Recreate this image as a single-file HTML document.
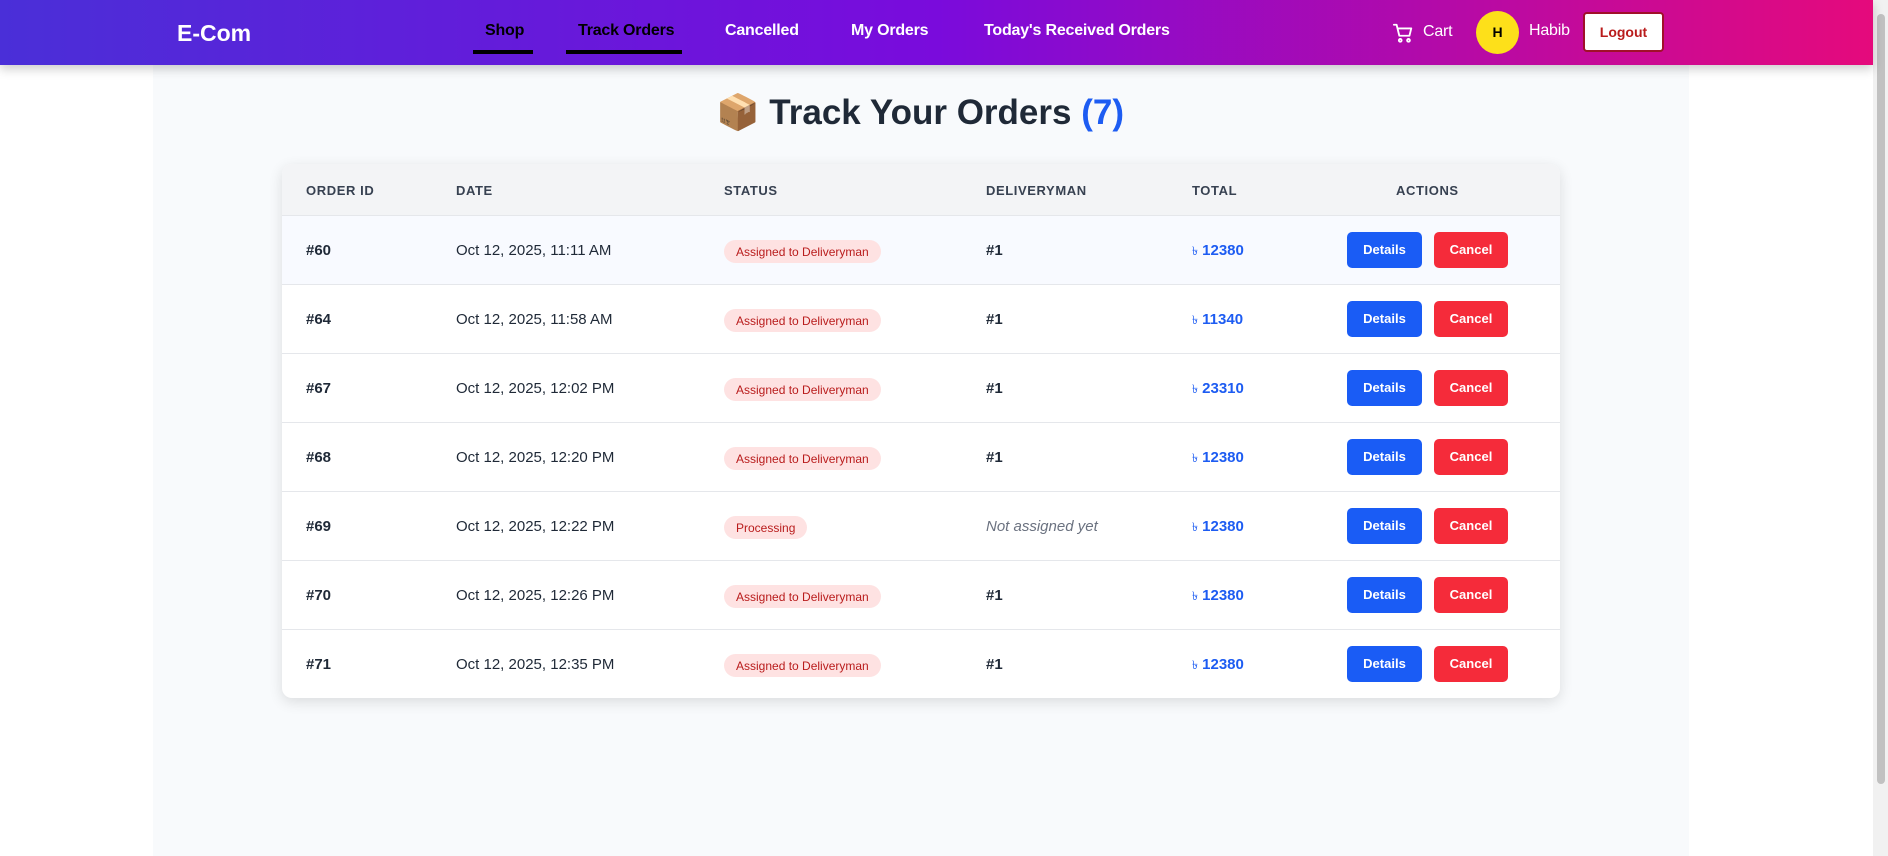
<!DOCTYPE html>
<html><head><meta charset="utf-8"><style>
*{box-sizing:border-box;margin:0;padding:0}
body{width:1888px;height:856px;overflow:hidden;background:#fff;font-family:"Liberation Sans",sans-serif;position:relative}
.nav{position:absolute;left:0;top:0;width:1873px;height:65px;background:linear-gradient(90deg,#4a2fd8 0%,#7a0bdc 50%,#e50a7c 100%);box-shadow:0 4px 10px rgba(0,0,0,.2);z-index:2}
.nav .logo{position:absolute;left:177px;top:20px;color:#fff;font-weight:bold;font-size:23px}
.nav a{position:absolute;top:22px;color:#fff;font-weight:bold;font-size:16px;text-decoration:none;white-space:nowrap;letter-spacing:-.2px}
.nav a.act{color:#000}
.ul{position:absolute;top:50px;height:4px;background:#000}
.scroll{position:absolute;right:0;top:0;width:15px;height:856px;background:#f1f1f1}
.scroll div{position:absolute;left:4px;top:14px;width:8px;height:770px;background:#c1c1c1;border-radius:4px}
.main{position:absolute;left:153px;top:65px;width:1536px;height:791px;background:#f8fafc}
h1{position:absolute;left:716px;top:92px;font-size:35px;font-weight:bold;color:#1f2937;white-space:nowrap}
h1 span.n{color:#1d5cf2}
.card{position:absolute;left:282px;top:164px;width:1278px;height:534px;background:#fff;border-radius:10px;box-shadow:0 4px 14px rgba(0,0,0,.12);overflow:hidden}
.row{position:absolute;left:0;width:1278px;height:69px;border-top:1px solid #e5e7eb;font-size:15px;color:#1f2937}
.row span{position:absolute;top:26px;white-space:nowrap}
.hd{top:0;height:51px;background:#f3f4f6;border:none;font-size:13px;font-weight:bold;color:#374151;letter-spacing:.6px}
.hd span{top:19px}
.b{font-weight:bold}
.badge{top:24px!important;background:#fee2e2;color:#b91c1c;font-size:12px;padding:5px 12px 4px;border-radius:12px}
.tot{color:#1d5cf2;font-weight:bold}
.tot i{font-style:normal;font-size:12px;font-weight:normal}
.btn{top:16px!important;height:36px;line-height:36px;text-align:center;color:#fff;font-size:13px;font-weight:bold;border-radius:5px}
</style></head><body>
<div class="nav">
<div class="logo">E-Com</div>
<a class="act" style="left:485px">Shop</a><div class="ul" style="left:473px;width:60px"></div>
<a class="act" style="left:578px">Track Orders</a><div class="ul" style="left:566px;width:116px"></div>
<a style="left:725px">Cancelled</a>
<a style="left:851px">My Orders</a>
<a style="left:984px">Today's Received Orders</a>
<svg style="position:absolute;left:1392px;top:22px" width="22" height="22" viewBox="0 0 24 24" fill="none" stroke="#fff" stroke-width="2" stroke-linecap="round" stroke-linejoin="round"><path d="M2 3h3l3 12h11l2-8H6"/><circle cx="9" cy="20" r="1.5"/><circle cx="18" cy="20" r="1.5"/></svg>
<a style="left:1423px;font-weight:normal;top:23px">Cart</a>
<div style="position:absolute;left:1476px;top:11px;width:43px;height:43px;border-radius:50%;background:#fde01a;text-align:center;line-height:43px;font-weight:bold;font-size:14px">H</div>
<a style="left:1529px;font-weight:normal">Habib</a>
<div style="position:absolute;left:1583px;top:12px;width:81px;height:40px;background:#fff;border:2px solid #a0102a;border-radius:4px;color:#b91c1c;font-size:14px;font-weight:bold;text-align:center;line-height:36px">Logout</div>
</div>
<div class="scroll"><div></div></div>
<div class="main"></div>
<h1>📦 Track Your Orders <span class="n">(7)</span></h1>
<div class="card">
<div class="row hd"><span style="left:24px">ORDER ID</span><span style="left:174px">DATE</span><span style="left:442px">STATUS</span><span style="left:704px">DELIVERYMAN</span><span style="left:910px">TOTAL</span><span style="left:1114px">ACTIONS</span></div>
<div class="row" style="top:51px;background:#f8faff"><span class="b" style="left:24px">#60</span><span style="left:174px">Oct 12, 2025, 11:11 AM</span><span class="badge" style="left:442px">Assigned to Deliveryman</span><span class="b" style="left:704px">#1</span><span class="tot" style="left:910px"><i>৳</i> 12380</span><span class="btn" style="left:1065px;width:75px;background:#1a5cf5">Details</span><span class="btn" style="left:1152px;width:74px;background:#f52b3a">Cancel</span></div>
<div class="row" style="top:120px"><span class="b" style="left:24px">#64</span><span style="left:174px">Oct 12, 2025, 11:58 AM</span><span class="badge" style="left:442px">Assigned to Deliveryman</span><span class="b" style="left:704px">#1</span><span class="tot" style="left:910px"><i>৳</i> 11340</span><span class="btn" style="left:1065px;width:75px;background:#1a5cf5">Details</span><span class="btn" style="left:1152px;width:74px;background:#f52b3a">Cancel</span></div>
<div class="row" style="top:189px"><span class="b" style="left:24px">#67</span><span style="left:174px">Oct 12, 2025, 12:02 PM</span><span class="badge" style="left:442px">Assigned to Deliveryman</span><span class="b" style="left:704px">#1</span><span class="tot" style="left:910px"><i>৳</i> 23310</span><span class="btn" style="left:1065px;width:75px;background:#1a5cf5">Details</span><span class="btn" style="left:1152px;width:74px;background:#f52b3a">Cancel</span></div>
<div class="row" style="top:258px"><span class="b" style="left:24px">#68</span><span style="left:174px">Oct 12, 2025, 12:20 PM</span><span class="badge" style="left:442px">Assigned to Deliveryman</span><span class="b" style="left:704px">#1</span><span class="tot" style="left:910px"><i>৳</i> 12380</span><span class="btn" style="left:1065px;width:75px;background:#1a5cf5">Details</span><span class="btn" style="left:1152px;width:74px;background:#f52b3a">Cancel</span></div>
<div class="row" style="top:327px"><span class="b" style="left:24px">#69</span><span style="left:174px">Oct 12, 2025, 12:22 PM</span><span class="badge" style="left:442px">Processing</span><span style="left:704px;font-style:italic;color:#6b7280">Not assigned yet</span><span class="tot" style="left:910px"><i>৳</i> 12380</span><span class="btn" style="left:1065px;width:75px;background:#1a5cf5">Details</span><span class="btn" style="left:1152px;width:74px;background:#f52b3a">Cancel</span></div>
<div class="row" style="top:396px"><span class="b" style="left:24px">#70</span><span style="left:174px">Oct 12, 2025, 12:26 PM</span><span class="badge" style="left:442px">Assigned to Deliveryman</span><span class="b" style="left:704px">#1</span><span class="tot" style="left:910px"><i>৳</i> 12380</span><span class="btn" style="left:1065px;width:75px;background:#1a5cf5">Details</span><span class="btn" style="left:1152px;width:74px;background:#f52b3a">Cancel</span></div>
<div class="row" style="top:465px"><span class="b" style="left:24px">#71</span><span style="left:174px">Oct 12, 2025, 12:35 PM</span><span class="badge" style="left:442px">Assigned to Deliveryman</span><span class="b" style="left:704px">#1</span><span class="tot" style="left:910px"><i>৳</i> 12380</span><span class="btn" style="left:1065px;width:75px;background:#1a5cf5">Details</span><span class="btn" style="left:1152px;width:74px;background:#f52b3a">Cancel</span></div>
</div>
</body></html>
